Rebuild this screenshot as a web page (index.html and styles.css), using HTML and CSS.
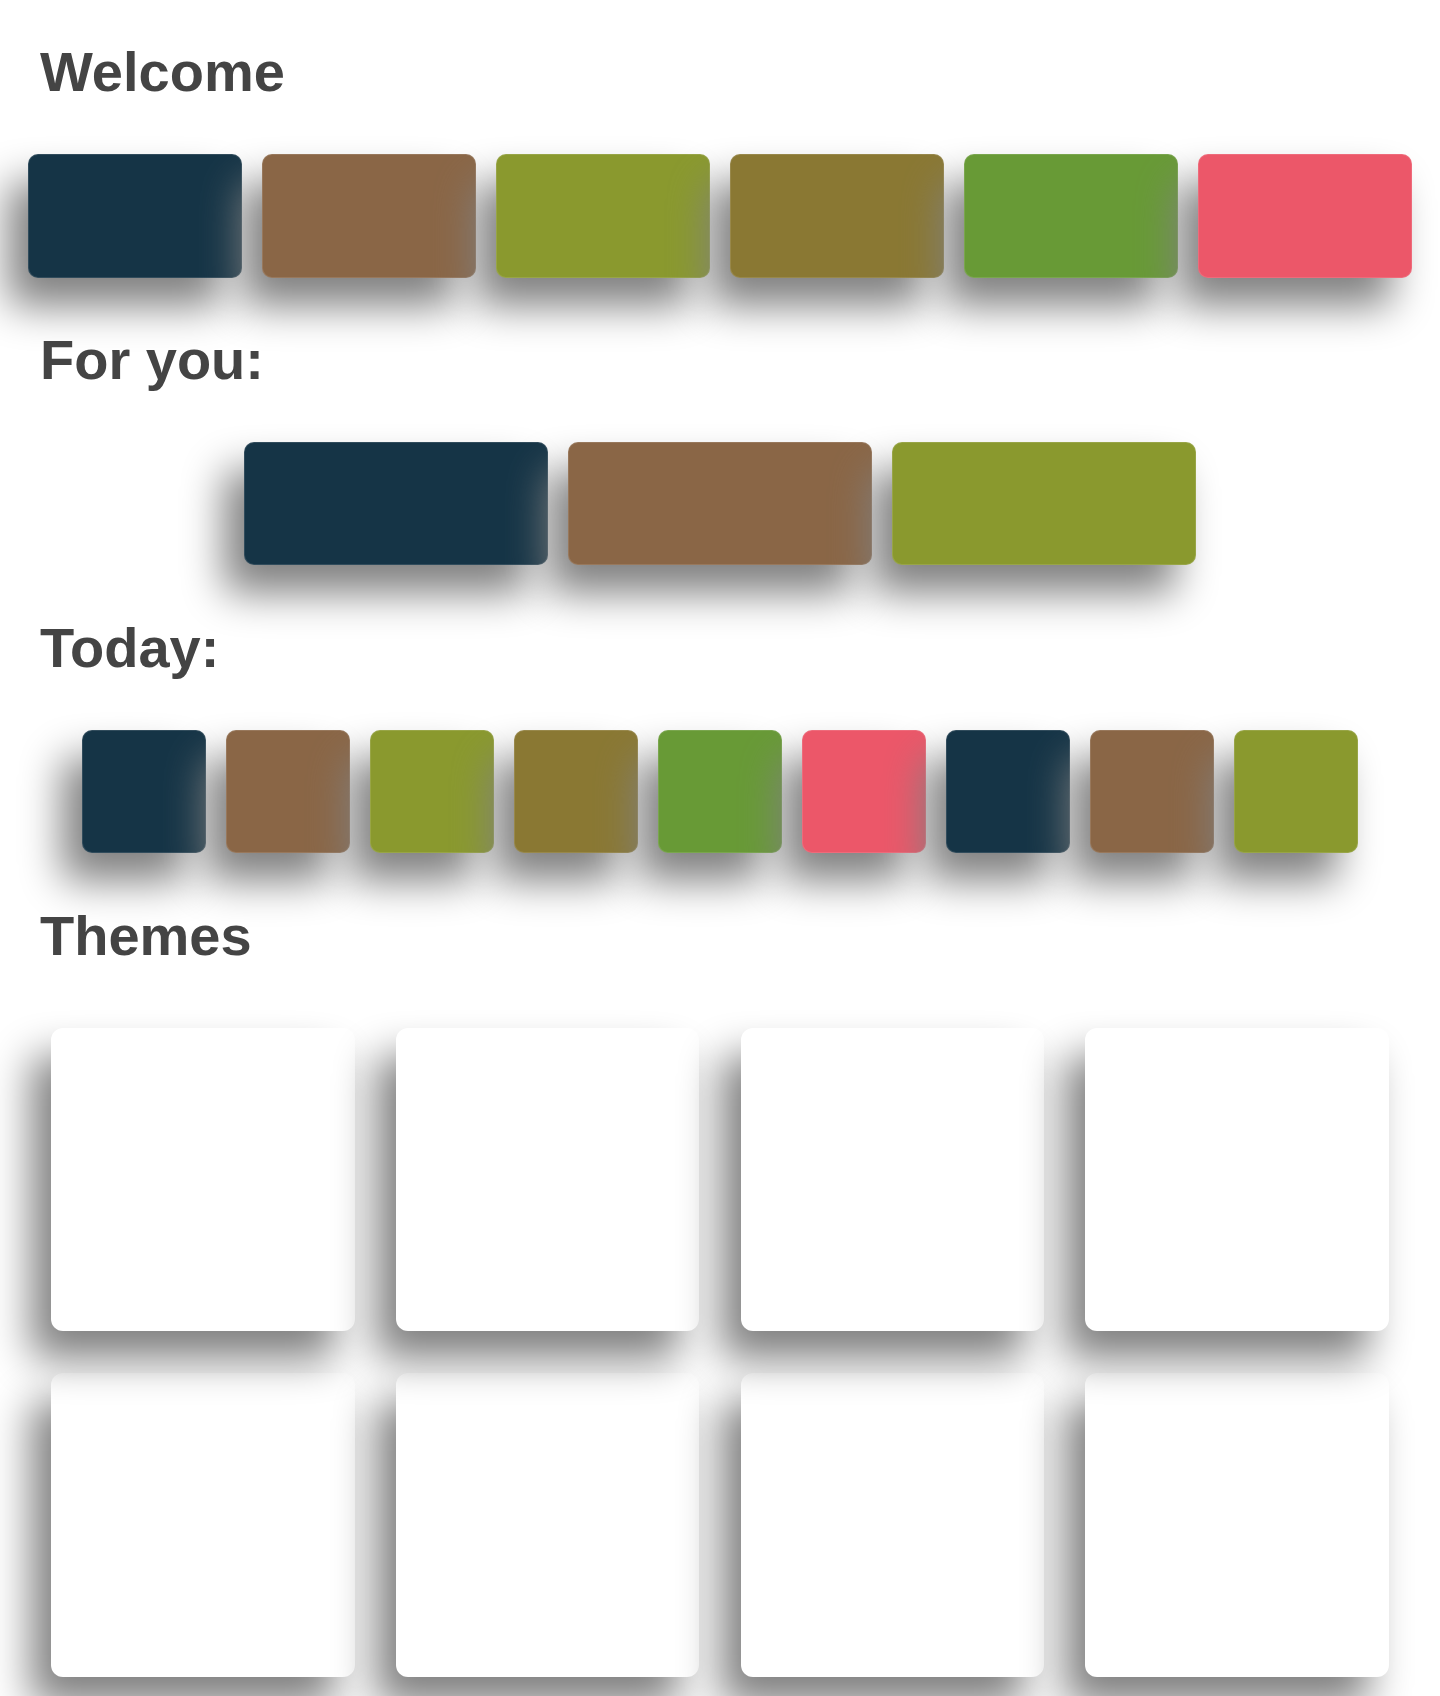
FILE: index.html
```html
<!DOCTYPE html>
<html lang="en">
<head>
<meta charset="utf-8">
<title>Welcome</title>
<link rel="stylesheet" href="styles.css">
</head>
<body>
<main class="page">
  <h2 class="title">Welcome</h2>
  <div class="row row-wide">
    <div class="tile navy"></div>
    <div class="tile brown"></div>
    <div class="tile olive"></div>
    <div class="tile khaki"></div>
    <div class="tile green"></div>
    <div class="tile pink"></div>
  </div>

  <h2 class="title">For you:</h2>
  <div class="row row-center">
    <div class="tile tile-lg navy"></div>
    <div class="tile tile-lg brown"></div>
    <div class="tile tile-lg olive"></div>
  </div>

  <h2 class="title">Today:</h2>
  <div class="row row-center">
    <div class="tile tile-sq navy"></div>
    <div class="tile tile-sq brown"></div>
    <div class="tile tile-sq olive"></div>
    <div class="tile tile-sq khaki"></div>
    <div class="tile tile-sq green"></div>
    <div class="tile tile-sq pink"></div>
    <div class="tile tile-sq navy"></div>
    <div class="tile tile-sq brown"></div>
    <div class="tile tile-sq olive"></div>
  </div>

  <h2 class="title">Themes</h2>
  <div class="themes">
    <div class="theme theme-top"></div>
    <div class="theme theme-top"></div>
    <div class="theme theme-top"></div>
    <div class="theme theme-top"></div>
    <div class="theme"></div>
    <div class="theme"></div>
    <div class="theme"></div>
    <div class="theme"></div>
  </div>
</main>
</body>
</html>
```

FILE: styles.css
```css
html, body {
  margin: 0;
  padding: 0;
  background: #ffffff;
}

.page {
  padding-top: 40px;
  padding-bottom: 40px;
  font-family: "Liberation Sans", Arial, Helvetica, sans-serif;
}

.title {
  margin: 0 0 0 40px;
  font-size: 56px;
  line-height: 64px;
  font-weight: 700;
  color: #444444;
}

.row {
  display: flex;
  gap: 20.6px;
  margin: 50.3px 0;
}

.row-wide {
  padding: 0 28.3px;
}

.row-wide .tile {
  flex: 1 1 0;
}

.row-center {
  justify-content: center;
}

.tile {
  box-sizing: border-box;
  height: 123.3px;
  border-radius: 10px;
  border: 1px solid rgba(255, 255, 255, 0.12);
  box-shadow: -20px 28px 42px #808080;
}

.tile-lg {
  width: 303.4px;
}

.tile-sq {
  width: 123.4px;
}

.navy  { background: #153446; }
.brown { background: #8a6646; }
.olive { background: #8a992e; }
.khaki { background: #8a7833; }
.green { background: #689a36; }
.pink  { background: #ec5769; }

.themes {
  display: grid;
  grid-template-columns: repeat(4, 303.4px);
  grid-auto-rows: 303.8px;
  column-gap: 41.2px;
  row-gap: 41.3px;
  justify-content: center;
  margin-top: 60px;
}

.theme {
  background: #ffffff;
  border-radius: 12px;
  box-shadow: -20px 28px 42px #808080;
}

.theme-top {
  z-index: 1;
}
```
